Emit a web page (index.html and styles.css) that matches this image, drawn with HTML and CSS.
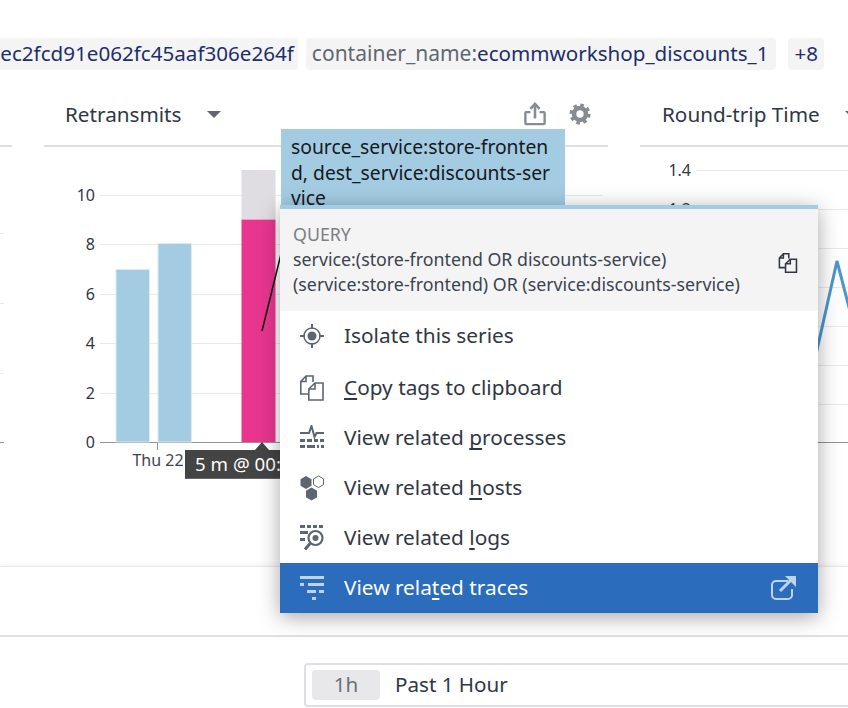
FILE: index.html
```html
<!DOCTYPE html>
<html lang="en">
<head>
    <meta charset="UTF-8">
    <meta name="viewport" content="width=device-width, initial-scale=1.0">
    <title>Retransmits</title>
    <link rel="stylesheet" href="styles.css">
</head>
<body>
    <div class="page">
        <div class="tags">
            <div class="tag tag-first"><span class="tag-value">0ec2fcd91e062fc45aaf306e264f</span></div>
            <div class="tag"><span class="tag-key">container_name:</span><span class="tag-value">ecommworkshop_discounts_1</span></div>
            <div class="tag tag-more"><span class="tag-value">+8</span></div>
        </div>

        <div class="widgets">
            <div class="widget">
                <div class="widget-head"></div>
                <svg class="chart" viewBox="-552 147 564 419">
                    <line class="grid" x1="0" x2="4" y1="233.5" y2="233.5"/>
                    <line class="grid" x1="0" x2="4" y1="303.5" y2="303.5"/>
                    <line class="grid" x1="0" x2="4" y1="373.5" y2="373.5"/>
                    <line class="axis" x1="0" x2="4" y1="442.5" y2="442.5"/>
                </svg>
            </div>

            <div class="widget">
                <div class="widget-head">
                    <span class="widget-title">Retransmits</span>
                    <span class="caret"></span>
                    <span class="widget-tools">
                        <svg class="tool" width="22" height="24" viewBox="0 0 24 26">
                            <path d="M7 11H2.500a1 1 0 0 0-1 1v11a1 1 0 0 0 1 1h19a1 1 0 0 0 1-1V12a1 1 0 0 0-1-1H17" fill="none" stroke="currentColor" stroke-width="2.600"/>
                            <path d="M12 18V3M7 7.500 12 2l5 5.500" fill="none" stroke="currentColor" stroke-width="2.800"/>
                        </svg>
                        <svg class="tool" width="22" height="22" viewBox="0 0 24 24">
                            <circle cx="12" cy="12" r="6.500" fill="none" stroke="currentColor" stroke-width="5"/>
                            <circle cx="12" cy="12" r="9.800" fill="none" stroke="currentColor" stroke-width="3.400" stroke-dasharray="3.850 3.850"/>
                        </svg>
                    </span>
                </div>
                <svg class="chart" viewBox="44 147 564 419">
                    <line class="grid" x1="100" x2="602" y1="195.500" y2="195.500"/>
                    <line class="grid" x1="100" x2="602" y1="244.500" y2="244.500"/>
                    <line class="grid" x1="100" x2="602" y1="294.500" y2="294.500"/>
                    <line class="grid" x1="100" x2="602" y1="343.500" y2="343.500"/>
                    <line class="grid" x1="100" x2="602" y1="393.500" y2="393.500"/>
                    <line class="axis" x1="100" x2="602" y1="442.500" y2="442.500"/>
                    <line class="axis" x1="157.500" x2="157.500" y1="442" y2="450"/>
                    <text class="y-label" x="95" y="201">10</text>
                    <text class="y-label" x="95" y="250">8</text>
                    <text class="y-label" x="95" y="300">6</text>
                    <text class="y-label" x="95" y="349">4</text>
                    <text class="y-label" x="95" y="399">2</text>
                    <text class="y-label" x="95" y="448">0</text>
                    <text class="x-label" x="158" y="466">Thu 22</text>
                    <rect class="bar" x="116" y="269.500" width="33.500" height="172.500"/>
                    <rect class="bar" x="158" y="243.500" width="33.500" height="198.500"/>
                    <rect class="bar-rest" x="241.500" y="170" width="34" height="49"/>
                    <rect class="bar-hot" x="241.500" y="219.500" width="34" height="222.500"/>
                    <line class="pointer" x1="262" y1="331" x2="281" y2="254"/>
                </svg>
            </div>

            <div class="widget">
                <div class="widget-head">
                    <span class="widget-title widget-title-right">Round-trip Time</span>
                    <span class="caret"></span>
                </div>
                <svg class="chart" viewBox="640 147 564 419">
                    <line class="grid" x1="696" x2="1204" y1="170.500" y2="170.500"/>
                    <line class="grid" x1="696" x2="1204" y1="209.500" y2="209.500"/>
                    <line class="grid" x1="696" x2="1204" y1="248.500" y2="248.500"/>
                    <line class="grid" x1="696" x2="1204" y1="287.500" y2="287.500"/>
                    <line class="grid" x1="696" x2="1204" y1="326.500" y2="326.500"/>
                    <line class="grid" x1="696" x2="1204" y1="365.500" y2="365.500"/>
                    <line class="grid" x1="696" x2="1204" y1="404.500" y2="404.500"/>
                    <line class="axis" x1="696" x2="1204" y1="442.500" y2="442.500"/>
                    <text class="y-label" x="691" y="176">1.4</text>
                    <text class="y-label" x="691" y="215">1.2</text>
                    <polyline class="series" points="790,470 837,261 860,350"/>
                </svg>
            </div>
        </div>

        <div class="band"></div>

        <div class="time-row">
            <div class="picker">
                <span class="picker-chip">1h</span>
                <span class="picker-text">Past 1 Hour</span>
            </div>
        </div>

        <div class="bar-tip">5 m @ 00:15</div>
        <div class="series-tip">source_service:store-frontend, dest_service:discounts-service</div>

        <div class="menu">
            <div class="menu-query">
                <div class="query-text">
                    <div class="query-label">QUERY</div>
                    <div>service:(store-frontend OR discounts-service)</div>
                    <div>(service:store-frontend) OR (service:discounts-service)</div>
                </div>
                <svg class="query-copy" width="20" height="20" viewBox="0 0 24 26">
                    <path d="M13 7V1H6L.8 6.500V19H8M6 1v5.500H.8" fill="none" stroke="currentColor" stroke-width="2"/>
                    <path d="M15 8H23V25H8.800V14z" fill="none" stroke="currentColor" stroke-width="2"/>
                    <path d="M15 8V14H8.800" fill="none" stroke="currentColor" stroke-width="2"/>
                </svg>
            </div>
            <ul class="menu-list">
                <li class="menu-item">
                    <svg class="menu-icon" width="24" height="26" viewBox="0 0 24 26">
                        <circle cx="12" cy="13" r="4.500" fill="currentColor"/>
                        <circle cx="12" cy="13" r="8" fill="none" stroke="currentColor" stroke-width="1.500"/>
                        <path d="M12 1v5M12 20v5M0 13h5M19 13h5" fill="none" stroke="currentColor" stroke-width="2"/>
                    </svg>
                    <span>Isolate this series</span>
                </li>
                <li class="menu-item menu-item-copy">
                    <svg class="menu-icon" width="24" height="26" viewBox="0 0 24 26">
                        <path d="M13 7V1H6L.8 6.500V19H8M6 1v5.500H.8" fill="none" stroke="currentColor" stroke-width="1.600"/>
                        <path d="M15 8H23V25H8.800V14z" fill="none" stroke="currentColor" stroke-width="1.600"/>
                        <path d="M15 8V14H8.800" fill="none" stroke="currentColor" stroke-width="1.600"/>
                    </svg>
                    <span><u>C</u>opy tags to clipboard</span>
                </li>
                <li class="menu-item">
                    <svg class="menu-icon" width="24" height="26" viewBox="0 0 24 26">
                        <path d="M0 8h9l2.500-7 3 11 2-4H24" fill="none" stroke="currentColor" stroke-width="2"/>
                        <path d="M0 14h5v3H0zM7 14h5v3H7zM14 14h4v3h-4zM20 14h4v3h-4zM0 20h5v3H0zM7 20h8v3H7zM17 20h2v3h-2zM21 20h3v3h-3z" fill="currentColor"/>
                    </svg>
                    <span>View related <u>p</u>rocesses</span>
                </li>
                <li class="menu-item">
                    <svg class="menu-icon" width="24" height="26" viewBox="0 0 24 26">
                        <path d="M6 1l5.500 3.200v6.600L6 14 .5 10.800V4.200z" fill="currentColor"/>
                        <path d="M18.500 1l5 2.900v5.700l-5 2.900-5-2.900V3.900z" fill="none" stroke="currentColor" stroke-width="1"/>
                        <path d="M11.500 12.500l5.500 3.200v6.600L11.500 25.500 6 22.300v-6.600z" fill="currentColor"/>
                    </svg>
                    <span>View related <u>h</u>osts</span>
                </li>
                <li class="menu-item">
                    <svg class="menu-icon" width="24" height="26" viewBox="0 0 24 26">
                        <path d="M0 0h5v3H0zM7 0h4v3H7zM13 0h4v3h-4zM19 0h4v3h-4zM0 6h8v3H0zM0 13h5v3H0z" fill="currentColor"/>
                        <circle cx="15.500" cy="13" r="7" fill="none" stroke="currentColor" stroke-width="2.200"/>
                        <circle cx="15.500" cy="13" r="3" fill="currentColor"/>
                        <path d="M10 18.500 5 24.500" fill="none" stroke="currentColor" stroke-width="3"/>
                    </svg>
                    <span>View related <u>l</u>ogs</span>
                </li>
                <li class="menu-item menu-item-active">
                    <svg class="menu-icon" width="24" height="26" viewBox="0 0 24 26">
                        <path d="M0 1h24v3H0zM0 8h4v3H0zM8 8h16v3H8zM7 15h9v3H7zM19 15h5v3h-5zM12 22h4v3h-4z" fill="currentColor"/>
                    </svg>
                    <span>View rela<u>t</u>ed traces</span>
                    <svg class="menu-external" width="28" height="26" viewBox="0 0 28 26">
                        <path d="M18 6H6a4 4 0 0 0-4 4v10a4 4 0 0 0 4 4h12a4 4 0 0 0 4-4v-6" fill="none" stroke="currentColor" stroke-width="2"/>
                        <path d="M10 16 21 5" fill="none" stroke="currentColor" stroke-width="3"/>
                        <path d="M15 1h11v11z" fill="currentColor"/>
                    </svg>
                </li>
            </ul>
        </div>
    </div>
</body>
</html>
```

FILE: styles.css
```css
html, body {
    margin: 0;
    padding: 0;
    background-color: white;
}
.page {
    position: relative;
    width: 848px;
    height: 708px;
    overflow: hidden;
    font-family: 'Noto Sans', sans-serif;
    color: #2f3744;
}
.tags {
    display: flex;
    justify-content: flex-end;
    gap: 8px;
    height: 32px;
    padding: 38px 24px 0 0;
}
.tag {
    flex-shrink: 0;
    display: flex;
    align-items: center;
    padding: 0 8px 2px 6px;
    background-color: #f4f4f5;
    border-radius: 4px;
    font-size: 20.600px;
    white-space: nowrap;
}
.tag-first {
    padding-right: 4px;
}
.tag-more {
    margin-left: 4px;
    padding: 0 6px 2px;
}
.tag-key {
    font-size: 21px;
    color: #5f6772;
}
.tag-value {
    color: #1c2f6b;
}
.widgets {
    display: flex;
    gap: 32px;
    margin: 30px 0 0 -552px;
    height: 466px;
}
.widget {
    flex-shrink: 0;
    width: 564px;
}
.widget-head {
    display: flex;
    align-items: center;
    box-sizing: border-box;
    height: 47px;
    padding: 0 17px 17px 21px;
    border-bottom: 2px solid #e0dfe4;
}
.widget-title {
    font-size: 20.700px;
    color: #2f3744;
}
.widget-title-right {
    margin-left: 1px;
}
.caret {
    width: 0;
    height: 0;
    margin-left: 25px;
    border-left: 7px solid transparent;
    border-right: 7px solid transparent;
    border-top: 7px solid #5f6670;
}
.widget-tools {
    display: flex;
    align-items: center;
    gap: 23px;
    margin-left: auto;
    color: #878c93;
}
.chart {
    display: block;
    width: 564px;
    height: 419px;
}
.grid {
    stroke: #e9e9eb;
    stroke-width: 1;
}
.axis {
    stroke: #8f9296;
    stroke-width: 1;
}
.y-label {
    font-size: 16px;
    fill: #2f3744;
    text-anchor: end;
}
.x-label {
    font-size: 16px;
    fill: #3d4450;
    text-anchor: middle;
}
.bar {
    fill: #a3cce3;
    stroke: #dcebf4;
    stroke-width: 1;
}
.bar-rest {
    fill: #dfdde2;
}
.bar-hot {
    fill: #e8368f;
}
.pointer {
    stroke: #111;
    stroke-width: 1.500;
}
.series {
    fill: none;
    stroke: #4b97c9;
    stroke-width: 3;
}
.band {
    height: 68px;
    border-top: 1px solid #e8e8e8;
    border-bottom: 2px solid #e0dfe4;
    box-shadow: 0 -2px 4px rgba(0, 0, 0, 0.04);
}
.time-row {
    padding: 26px 0 0 304px;
}
.picker {
    display: flex;
    align-items: center;
    box-sizing: border-box;
    width: 600px;
    height: 44px;
    padding: 0 6px;
    border: 2px solid #dedee3;
    border-radius: 4px;
}
.picker-chip {
    width: 68px;
    height: 30px;
    line-height: 28px;
    text-align: center;
    background-color: #e8e8ea;
    border-radius: 4px;
    font-size: 20.600px;
    color: #6a7079;
}
.picker-text {
    margin: 0 0 2px 15px;
    font-size: 20.600px;
}
.bar-tip {
    position: absolute;
    left: 185px;
    top: 450px;
    width: 110px;
    height: 28px;
    padding-left: 10px;
    line-height: 28px;
    background-color: #444;
    border-bottom: 1px solid #666;
    font-size: 18.700px;
    color: white;
    white-space: nowrap;
}
.bar-tip::before {
    content: "";
    position: absolute;
    left: 70px;
    top: -8px;
    border-left: 7px solid transparent;
    border-right: 7px solid transparent;
    border-bottom: 8px solid #444;
}
.series-tip {
    position: absolute;
    left: 281px;
    top: 129px;
    box-sizing: border-box;
    width: 284px;
    padding: 5px 15px 5px 10px;
    line-height: 25.500px;
    background-color: #a3cce3;
    font-size: 19.300px;
    color: #16181c;
    word-break: break-all;
}
.menu {
    position: absolute;
    left: 280px;
    top: 205px;
    width: 538px;
    background-color: white;
    border-top: 4px solid #a3cce3;
    box-shadow: 0 4px 20px rgba(0, 0, 0, 0.35);
}
.menu-query {
    display: flex;
    justify-content: space-between;
    height: 102px;
    box-sizing: border-box;
    padding: 13px 20px 0 13px;
    background-color: #f4f4f4;
    font-size: 17.800px;
    line-height: 25px;
    color: #3a4350;
}
.query-label {
    color: #7a7f85;
}
.query-copy {
    margin-top: 31px;
    color: #2f3744;
}
.menu-list {
    list-style: none;
    margin: 0;
    padding: 0;
}
.menu-item {
    display: flex;
    align-items: center;
    gap: 20px;
    height: 50px;
    padding: 0 20px;
    font-size: 20.800px;
    color: #2f3744;
}
.menu-item span {
    padding-bottom: 2px;
}
.menu-item u {
    text-decoration-thickness: 2px;
    text-decoration-skip-ink: none;
    text-underline-offset: 3px;
}
.menu-item-copy {
    margin-top: 2px;
}
.menu-item-active {
    background-color: #2b6cbc;
    color: white;
}
.menu-icon {
    flex-shrink: 0;
    color: #5c6570;
}
.menu-item-active .menu-icon, .menu-external {
    color: #bed4ee;
}
.menu-external {
    margin-left: auto;
}
```
